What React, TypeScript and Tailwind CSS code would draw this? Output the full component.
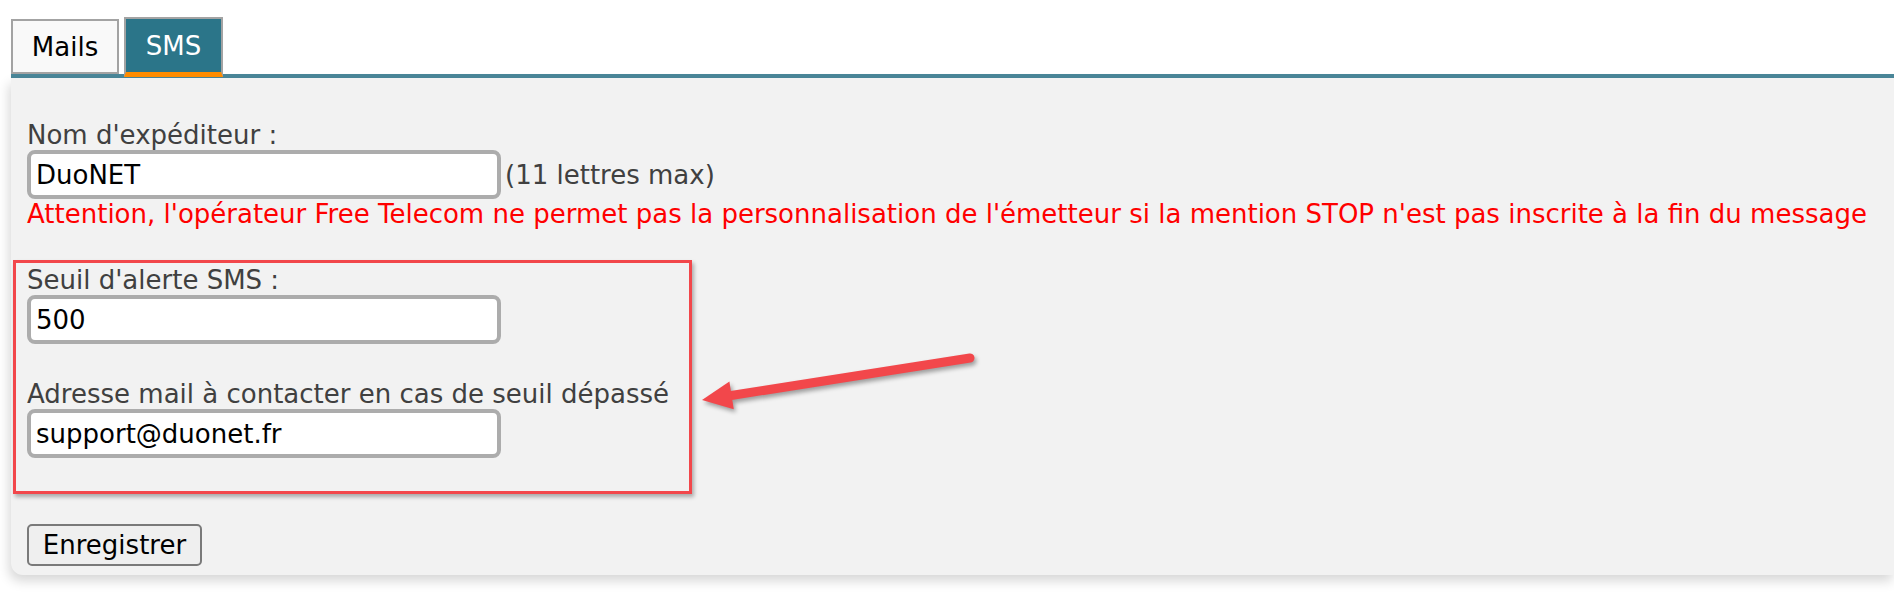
import React from "react"

function Field({ value }: { value: string }) {
  return (
    <input
      defaultValue={value}
      className="h-[49px] w-[474px] rounded-[8px] border-4 border-[#acacac] bg-white pl-[5px] text-[26px] text-black outline-none"
    />
  )
}

export default function App() {
  return (
    <div className="relative min-h-[595px] overflow-hidden bg-white font-['DejaVu_Sans',Verdana,sans-serif] text-[26px] leading-[30px]">
      {/* tabs */}
      <div className="flex items-end gap-[5px] pl-[11px] pt-[17px]">
        <div className="flex h-[55px] w-[108px] items-center justify-center border-2 border-[#a3a3a3] bg-[#f9f9f9] pt-[1px] text-black">
          Mails
        </div>
        <div className="relative z-10 -mb-[3px] flex h-[60px] w-[99px] items-center justify-center border-2 border-b-[5px] border-[#a3a3a3] border-b-[#ff8c00] bg-[#2b7589] text-white">
          SMS
        </div>
      </div>
      <div className="ml-[11px] h-[4px] bg-[#4a8799]" />

      {/* panel */}
      <div className="ml-[11px] rounded-bl-[12px] bg-[#f2f2f2] pb-[9px] pl-[16px] pt-[42px] shadow-[-2px_6px_12px_rgba(0,0,0,0.16)]">
        <div className="text-[#404040]">Nom d'expéditeur :</div>
        <div className="flex items-baseline">
          <Field value="DuoNET" />
          <span className="ml-[4px] text-[#404040]">(11 lettres max)</span>
        </div>
        <div className="text-[#ff0000]">
          Attention, l'opérateur Free Telecom ne permet pas la personnalisation de l'émetteur si la mention STOP n'est pas inscrite à la fin du message
        </div>

        <div className="-ml-[14px] mt-[31px] w-[679px] border-[3px] border-[#f2474b] pb-[33px] pl-[11px] pt-[2px] shadow-[2px_3px_4px_rgba(0,0,0,0.3)]">
          <div className="text-[#404040]">Seuil d'alerte SMS :</div>
          <Field value="500" />
          <div className="mt-[35px] text-[#404040]">Adresse mail à contacter en cas de seuil dépassé</div>
          <Field value="support@duonet.fr" />
        </div>

        <button className="mt-[30px] h-[42px] w-[175px] rounded-[5px] border-2 border-[#7a7a7a] bg-[#efefef] text-[26px] text-black">
          Enregistrer
        </button>
      </div>

      {/* annotation arrow */}
      <svg
        className="absolute left-[690px] top-[340px] drop-shadow-[2px_3px_2px_rgba(0,0,0,0.35)]"
        width="300"
        height="90"
        viewBox="0 0 300 90"
      >
        <line x1="280" y1="18" x2="38" y2="56" stroke="#f2474b" strokeWidth="9" strokeLinecap="round" />
        <polygon points="12,60 43.8,69.2 39.4,41.6" fill="#f2474b" />
      </svg>
    </div>
  )
}
